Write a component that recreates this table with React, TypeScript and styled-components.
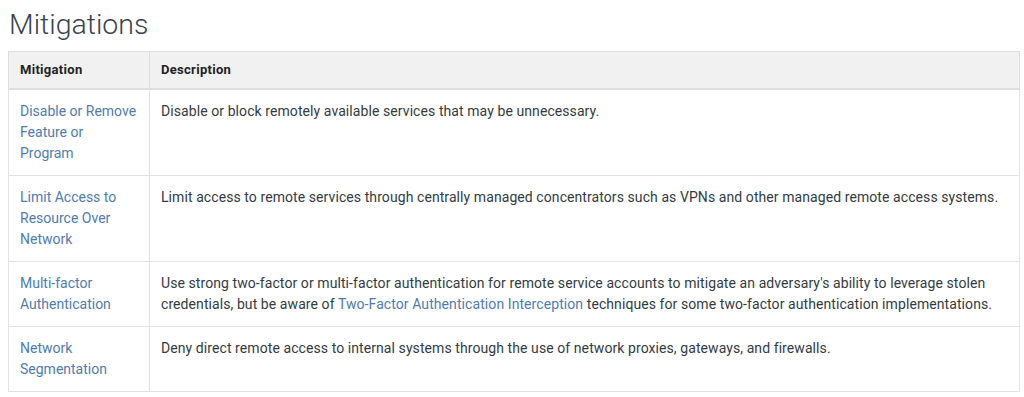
import styled, { createGlobalStyle } from "styled-components";

const GlobalStyle = createGlobalStyle`
  body {
    margin: 0;
    background: #fff;
    font-family: Roboto, "Liberation Sans", sans-serif;
  }
`;

const Page = styled.div`
  padding: 7px 8px 0 8px;
  color: #39434c;
`;

const Title = styled.h2`
  margin: 0 0 8px 1px;
  font-size: 28.5px;
  font-weight: 300;
  line-height: 36px;
  color: #39434c;
`;

const Table = styled.table`
  width: 1012px;
  border-collapse: collapse;
  font-size: 14px;
  line-height: 21px;
  letter-spacing: 0.08px;
`;

const HeadCell = styled.th<{ $narrow?: boolean }>`
  text-align: left;
  font-size: 13px;
  font-weight: 700;
  letter-spacing: 0.3px;
  padding: 7px 11px 8px;
  width: ${(p) => (p.$narrow ? "118px" : "auto")};
  background: #f1f1f1;
  border: 1px solid #dedede;
  border-bottom-width: 2px;
  color: #222;
`;

const Cell = styled.td<{ $narrow?: boolean }>`
  vertical-align: top;
  padding: 11px;
  border: 1px solid #e2e2e2;
  width: ${(p) => (p.$narrow ? "118px" : "auto")};
  color: #333b42;
`;

const Link = styled.a`
  color: #4f7cac;
  text-decoration: none;
`;

const NameLink = styled(Link)`
  letter-spacing: 0;
`;

const rows = [
  {
    name: "Disable or Remove Feature or Program",
    desc: <>Disable or block remotely available services that may be unnecessary.</>,
  },
  {
    name: "Limit Access to Resource Over Network",
    desc: (
      <>
        Limit access to remote services through centrally managed concentrators such as VPNs and
        other managed remote access systems.
      </>
    ),
  },
  {
    name: "Multi-factor Authentication",
    desc: (
      <>
        Use strong two-factor or multi-factor authentication for remote service accounts to mitigate
        an adversary's ability to leverage stolen credentials, but be aware of{" "}
        <Link href="#">Two-Factor Authentication Interception</Link> techniques for some two-factor
        authentication implementations.
      </>
    ),
  },
  {
    name: "Network Segmentation",
    desc: (
      <>
        Deny direct remote access to internal systems through the use of network proxies, gateways,
        and firewalls.
      </>
    ),
  },
];

const App = () => (
  <Page>
    <GlobalStyle />
    <Title>Mitigations</Title>
    <Table>
      <thead>
        <tr>
          <HeadCell $narrow>Mitigation</HeadCell>
          <HeadCell>Description</HeadCell>
        </tr>
      </thead>
      <tbody>
        {rows.map((r) => (
          <tr key={r.name}>
            <Cell $narrow>
              <NameLink href="#">{r.name}</NameLink>
            </Cell>
            <Cell>{r.desc}</Cell>
          </tr>
        ))}
      </tbody>
    </Table>
  </Page>
);

export default App;
